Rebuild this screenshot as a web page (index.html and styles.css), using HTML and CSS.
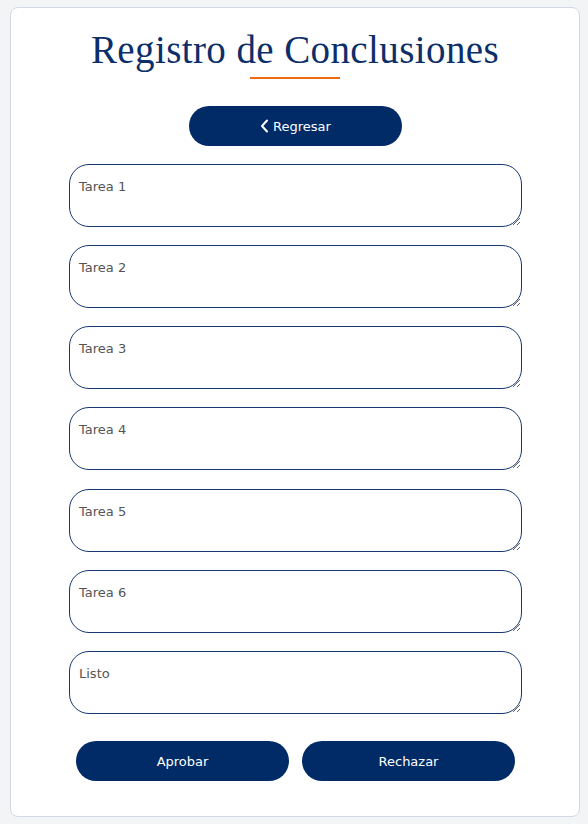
FILE: index.html
```html
<!DOCTYPE html>
<html lang="es">
<head>
<meta charset="utf-8">
<title>Registro de Conclusiones</title>
<link rel="stylesheet" href="styles.css">
</head>
<body>
<main class="card">
  <h1 class="title">Registro de Conclusiones</h1>
  <div class="rule"></div>
  <button class="btn btn-back" type="button">
    <svg class="chev" width="9" height="14" viewBox="0 0 9 14" aria-hidden="true"><path d="M7 1.5 L2 7 L7 12.5" fill="none" stroke="#fff" stroke-width="2" stroke-linecap="round" stroke-linejoin="round"/></svg>
    <span>Regresar</span>
  </button>
  <form class="form">
    <textarea class="field" placeholder="Tarea 1"></textarea>
    <textarea class="field" placeholder="Tarea 2"></textarea>
    <textarea class="field" placeholder="Tarea 3"></textarea>
    <textarea class="field" placeholder="Tarea 4"></textarea>
    <textarea class="field" placeholder="Tarea 5"></textarea>
    <textarea class="field" placeholder="Tarea 6"></textarea>
    <textarea class="field" placeholder="Listo"></textarea>
    <div class="actions">
      <button class="btn" type="button">Aprobar</button>
      <button class="btn" type="button">Rechazar</button>
    </div>
  </form>
</main>
</body>
</html>
```
FILE: styles.css
```css
* { box-sizing: border-box; }
html, body { margin: 0; }
body {
  background: #f3f4f6;
  font-family: "DejaVu Sans", sans-serif;
  padding: 7px 8px 7px 10px;
}
.card {
  width: 570px;
  height: 810px;
  background: #fff;
  border: 1px solid #d3d9e3;
  border-radius: 8px;
  display: flex;
  flex-direction: column;
  align-items: center;
  padding-top: 19px;
}
.title {
  margin: 0;
  font-family: "Liberation Serif", serif;
  font-weight: 400;
  font-size: 39px;
  line-height: 46px;
  color: #0c2f6a;
  letter-spacing: 0.4px;
}
.rule {
  width: 90px;
  height: 2px;
  background: #f06a14;
  margin-top: 4px;
}
.btn {
  width: 213px;
  height: 40px;
  border: none;
  border-radius: 20px;
  background: #002b67;
  color: #fff;
  font-family: "DejaVu Sans", sans-serif;
  font-size: 13px;
  display: flex;
  align-items: center;
  justify-content: center;
  gap: 4px;
  padding: 0;
}
.btn-back {
  margin-top: 27px;
  margin-left: 1px;
}
.chev { display: block; }
.form {
  margin-top: 18px;
  margin-left: 1px;
  width: 453px;
  display: flex;
  flex-direction: column;
  gap: 18.17px;
}
.field {
  display: block;
  width: 453px;
  height: 63px;
  border: 1px solid #16376f;
  border-radius: 20px;
  padding: 14px 9px 10px;
  font-family: "DejaVu Sans", sans-serif;
  font-size: 13px;
  color: #333;
  background: #fff;
  margin: 0;
}
.field::placeholder { color: #555; }
.actions {
  display: flex;
  justify-content: center;
  gap: 13px;
  margin-top: 9px;
}
```
